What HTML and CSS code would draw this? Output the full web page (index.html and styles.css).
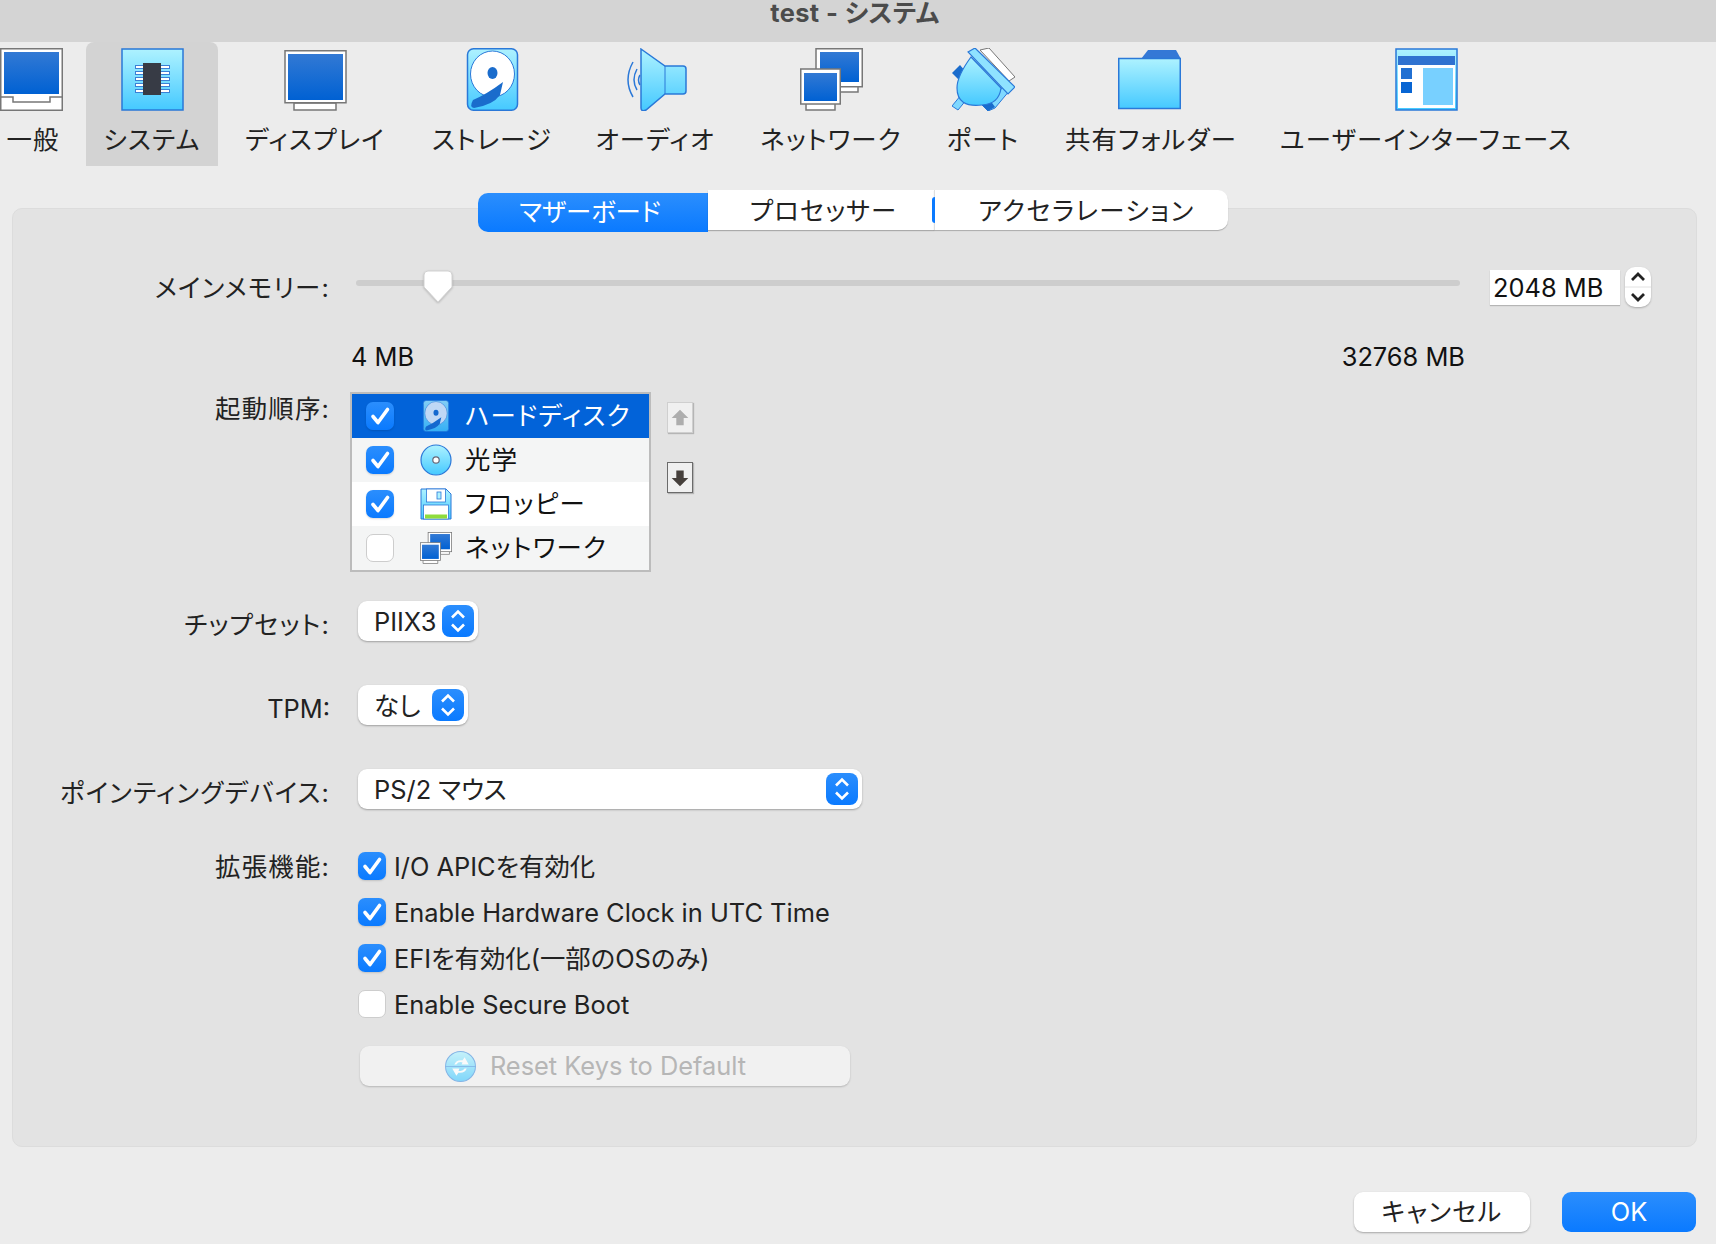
FILE: index.html
```html
<!DOCTYPE html>
<html lang="ja">
<head>
    <meta charset="UTF-8">
    <title>test - システム</title>
    <link rel="stylesheet" href="styles.css">
</head>
<body>
    <!-- Shared gradients and icons -->
    <svg class="defs" aria-hidden="true">
        <defs>
            <linearGradient id="sky" x1="0" y1="0" x2="0" y2="1">
                <stop offset="0" stop-color="#aef2ff"/>
                <stop offset="1" stop-color="#45c9ff"/>
            </linearGradient>
            <linearGradient id="screen" x1="0" y1="0" x2="0" y2="1">
                <stop offset="0" stop-color="#3279d4"/>
                <stop offset="1" stop-color="#0061d3"/>
            </linearGradient>
            <symbol id="i-general" viewBox="0 0 63 63">
                <rect x="0.75" y="0.75" width="61.5" height="61.5" fill="#fff" stroke="#777" stroke-width="1.5"/>
                <rect x="4" y="4" width="55" height="42" fill="url(#screen)"/>
                <path d="M0 49H13V54H50V49H63" fill="none" stroke="#777" stroke-width="1.5"/>
            </symbol>
            <symbol id="i-system" viewBox="0 0 63 63">
                <rect x="1" y="1" width="61" height="61" fill="url(#sky)" stroke="#2a78d8" stroke-width="1.5"/>
                <g fill="#fff" stroke="#3a80d6">
                    <rect x="14.5" y="17.5" width="34" height="3"/>
                    <rect x="14.5" y="23.5" width="34" height="3"/>
                    <rect x="14.5" y="29.5" width="34" height="3"/>
                    <rect x="14.5" y="35.5" width="34" height="3"/>
                    <rect x="14.5" y="41.5" width="34" height="3"/>
                </g>
                <rect x="22" y="15" width="18" height="32" fill="#373b45"/>
            </symbol>
            <symbol id="i-display" viewBox="0 0 63 63">
                <path d="M10 55H52V62H10Z" fill="#fff" stroke="#777" stroke-width="1.5"/>
                <rect x="1" y="2.75" width="61" height="52" fill="#fff" stroke="#777" stroke-width="1.5"/>
                <rect x="4" y="6" width="55" height="46" fill="url(#screen)"/>
            </symbol>
            <symbol id="i-storage" viewBox="0 0 63 63">
                <rect x="6.5" y="0.75" width="50" height="61.5" rx="6" fill="url(#sky)" stroke="#2a78d8" stroke-width="1.5"/>
                <ellipse cx="31.5" cy="26" rx="22" ry="23" fill="#fff" stroke="#2a78d8"/>
                <ellipse cx="31.5" cy="25" rx="5" ry="6" fill="#1a6ccc"/>
                <path d="M42 34L39 47Q32 57 13 60Q8 59 12 52Q26 46 42 34Z" fill="#1a6ccc"/>
            </symbol>
            <symbol id="i-audio" viewBox="0 0 63 63">
                <path d="M17 1L41 18H59Q62 18 62 21V43Q62 46 59 46H41L22 62Q17 64 17 60V4Z" fill="url(#sky)" stroke="#2a78d8" stroke-width="1.5"/>
                <path d="M41 18V46" fill="none" stroke="#2a78d8"/>
                <path d="M9 14Q-1 32 9 49M13 21Q7 32 13 42M16 27Q13 32 16 37" fill="none" stroke="#2a78d8" stroke-width="1.5"/>
            </symbol>
            <symbol id="i-network" viewBox="0 0 63 63">
                <path d="M40 38H58V44H40Z" fill="#fff" stroke="#777" stroke-width="1.5"/>
                <rect x="16" y="0.75" width="46.25" height="38" fill="#fff" stroke="#777" stroke-width="1.5"/>
                <rect x="20" y="4" width="39" height="30" fill="url(#screen)"/>
                <path d="M6 55H35V62H6Z" fill="#fff" stroke="#777" stroke-width="1.5"/>
                <rect x="0.75" y="21" width="39.5" height="35" fill="#fff" stroke="#777" stroke-width="1.5"/>
                <rect x="4" y="25" width="33" height="28" fill="url(#screen)"/>
            </symbol>
            <symbol id="i-port" viewBox="0 0 63 63">
                <path d="M28 2L37 0L63 29L57 33Z" fill="#fff" stroke="#777"/>
                <path d="M0 25L8 17L14 24L8 33Z" fill="#1a6ccc"/>
                <path d="M0 58L9 47L15 51L6 62Z" fill="#7fd8ff" stroke="#2a78d8"/>
                <path d="M38 53L52 38L58 42L43 60L36 63L30 57Z" fill="#7fd8ff" stroke="#2a78d8"/>
                <path d="M30 57L38 52L43 59L36 63Z" fill="#1a6ccc"/>
                <path d="M19 9L49 40Q47 56 30 57Q5 60 5 40Q5 28 19 9Z" fill="url(#sky)" stroke="#2a78d8" stroke-width="1.2"/>
                <path d="M16 4L23 0L63 39L56 46Z" fill="#8fe2ff" stroke="#2a78d8" stroke-width="1.2"/>
            </symbol>
            <symbol id="i-folder" viewBox="0 0 63 63">
                <path d="M23 11L30 2H58L63 11Z" fill="#3478d6"/>
                <rect x="0.75" y="10.5" width="61.5" height="50" fill="url(#sky)" stroke="#2a78d8" stroke-width="1.5"/>
            </symbol>
            <symbol id="i-ui" viewBox="0 0 63 63">
                <rect x="1" y="1" width="61" height="61" fill="url(#sky)" stroke="#2a78d8" stroke-width="1.5"/>
                <rect x="3" y="8" width="57" height="52" fill="#fff"/>
                <rect x="3" y="8" width="57" height="9" fill="#2f72d0"/>
                <rect x="6" y="20" width="11" height="11" fill="#2170d2"/>
                <rect x="6" y="34" width="11" height="11" fill="#0865d3"/>
                <rect x="28" y="20" width="30" height="37" fill="#78d0ff"/>
            </symbol>
            <symbol id="i-disc" viewBox="0 0 32 32">
                <circle cx="16" cy="16" r="15" fill="url(#sky)" stroke="#2a78d8" stroke-width="1.2"/>
                <circle cx="16" cy="16" r="3.2" fill="#fff" stroke="#667" stroke-width="1.2"/>
            </symbol>
            <symbol id="i-floppy" viewBox="0 0 32 32">
                <path d="M1 1H26L31 6V31H1Z" fill="url(#sky)" stroke="#2a78d8"/>
                <rect x="6.5" y="1" width="19" height="13" fill="#fff" stroke="#2a78d8" stroke-width="0.8"/>
                <rect x="17" y="4" width="4" height="7" fill="#aef2ff" stroke="#2a78d8" stroke-width="0.8"/>
                <rect x="3.5" y="17" width="25" height="14" fill="#fff" stroke="#2a78d8" stroke-width="0.8"/>
                <rect x="5" y="26.5" width="22" height="4" fill="#8fdc3c"/>
            </symbol>
            <symbol id="i-reset" viewBox="0 0 32 32">
                <circle cx="16" cy="16" r="14.5" fill="url(#sky)" stroke="#4a94e0"/>
                <path d="M1 16H31" stroke="#4a94e0" fill="none" stroke-width="0.8"/>
                <path d="M10 14Q12 9 18 10L20 7L24 14H17L18 12Q14 11 12 14ZM22 18Q20 23 14 22L12 25L8 18H15L14 20Q18 21 20 18Z" fill="#fff"/>
            </symbol>
            <symbol id="i-updown" viewBox="0 0 32 32">
                <path d="M10 12.5L16 6.5L22 12.5M10 19.5L16 25.5L22 19.5" fill="none" stroke="#fff" stroke-width="2.6"/>
            </symbol>
            <symbol id="i-check" viewBox="0 0 28 28">
                <path d="M7 14.5L12 20.5L21.5 7.5" fill="none" stroke="#fff" stroke-width="3.6" stroke-linecap="round" stroke-linejoin="round"/>
            </symbol>
        </defs>
    </svg>

    <header class="titlebar">test - システム</header>

    <!-- Settings pages -->
    <nav class="toolbar">
        <div class="tab tab-shifted"><svg class="tab-icon"><use href="#i-general"/></svg><span>一般</span></div>
        <div class="tab tab-active"><svg class="tab-icon"><use href="#i-system"/></svg><span>システム</span></div>
        <div class="tab"><svg class="tab-icon"><use href="#i-display"/></svg><span>ディスプレイ</span></div>
        <div class="tab"><svg class="tab-icon"><use href="#i-storage"/></svg><span>ストレージ</span></div>
        <div class="tab"><svg class="tab-icon"><use href="#i-audio"/></svg><span>オーディオ</span></div>
        <div class="tab"><svg class="tab-icon"><use href="#i-network"/></svg><span>ネットワーク</span></div>
        <div class="tab"><svg class="tab-icon"><use href="#i-port"/></svg><span>ポート</span></div>
        <div class="tab tab-shifted"><svg class="tab-icon"><use href="#i-folder"/></svg><span>共有フォルダー</span></div>
        <div class="tab"><svg class="tab-icon"><use href="#i-ui"/></svg><span>ユーザーインターフェース</span></div>
    </nav>

    <div class="segments">
        <div class="segment segment-on">マザーボード</div>
        <div class="segment segment-mid">プロセッサー</div>
        <div class="segment segment-last">アクセラレーション</div>
    </div>

    <main class="panel">
        <!-- Memory -->
        <section class="row row-memory">
            <div class="label">メインメモリー:</div>
            <div class="memory">
                <div class="slider">
                    <div class="track"></div>
                    <svg class="thumb" viewBox="0 0 30 34"><path d="M5 1H25Q29 1 29 5V17L15 32L1 17V5Q1 1 5 1Z" fill="#fff" stroke="#d2d2d2"/></svg>
                </div>
                <div class="field">2048 MB</div>
                <div class="stepper">
                    <svg viewBox="0 0 26 40"><path d="M7 13L13 7L19 13" fill="none" stroke="#222" stroke-width="2.8"/><path d="M7 27L13 33L19 27" fill="none" stroke="#222" stroke-width="2.8"/><path d="M0 20H26" stroke="#e2e2e2"/></svg>
                </div>
            </div>
        </section>

        <section class="row row-range">
            <div></div>
            <div class="range"><span>4 MB</span><span>32768 MB</span></div>
        </section>

        <!-- Boot order -->
        <section class="row row-boot">
            <div class="label label-boot">起動順序:</div>
            <div class="boot">
                <ul class="boot-list">
                    <li class="boot-item boot-selected"><span class="check check-on"><svg><use href="#i-check"/></svg></span><svg class="boot-icon boot-icon-faded"><use href="#i-storage"/></svg>ハードディスク</li>
                    <li class="boot-item boot-alt"><span class="check check-on"><svg><use href="#i-check"/></svg></span><svg class="boot-icon"><use href="#i-disc"/></svg>光学</li>
                    <li class="boot-item"><span class="check check-on"><svg><use href="#i-check"/></svg></span><svg class="boot-icon"><use href="#i-floppy"/></svg>フロッピー</li>
                    <li class="boot-item boot-alt"><span class="check"></span><svg class="boot-icon"><use href="#i-network"/></svg>ネットワーク</li>
                </ul>
                <div class="boot-moves">
                    <div class="move move-off"><svg viewBox="0 0 26 31"><path d="M13 7L22 16H17V24H9V16H4Z" fill="#adadad"/></svg></div>
                    <div class="move"><svg viewBox="0 0 26 31"><path d="M13 25L22 16H17V8H9V16H4Z" fill="#46403c"/></svg></div>
                </div>
            </div>
        </section>

        <!-- Drop-downs -->
        <section class="row row-select">
            <div class="label label-low">チップセット:</div>
            <div class="select select-chipset">PIIX3<span class="select-arrows"><svg><use href="#i-updown"/></svg></span></div>
        </section>
        <section class="row row-select">
            <div class="label label-low label-latin">TPM:</div>
            <div class="select select-tpm">なし<span class="select-arrows"><svg><use href="#i-updown"/></svg></span></div>
        </section>
        <section class="row row-select">
            <div class="label label-low">ポインティングデバイス:</div>
            <div class="select select-mouse">PS/2 マウス<span class="select-arrows"><svg><use href="#i-updown"/></svg></span></div>
        </section>

        <!-- Extended features -->
        <section class="row row-features">
            <div class="label label-feature">拡張機能:</div>
            <div class="features">
                <div class="feature"><span class="check check-on"><svg><use href="#i-check"/></svg></span>I/O APICを有効化</div>
                <div class="feature"><span class="check check-on"><svg><use href="#i-check"/></svg></span>Enable Hardware Clock in UTC Time</div>
                <div class="feature"><span class="check check-on"><svg><use href="#i-check"/></svg></span>EFIを有効化(一部のOSのみ)</div>
                <div class="feature"><span class="check"></span>Enable Secure Boot</div>
                <div class="reset"><svg class="reset-icon"><use href="#i-reset"/></svg>Reset Keys to Default</div>
            </div>
        </section>
    </main>

    <footer class="actions">
        <button class="button">キャンセル</button>
        <button class="button button-primary">OK</button>
    </footer>
</body>
</html>
```

FILE: styles.css
```css
* {
    box-sizing: border-box;
}
html, body {
    height: 100%;
}
body {
    margin: 0;
    overflow: hidden;
    background-color: #ececec;
    color: #222;
    font-family: Inter, "Noto Sans CJK JP", sans-serif;
    font-size: 25.4px;
    font-feature-settings: "palt";
    line-height: 32px;
}
.defs {
    position: absolute;
    width: 0;
    height: 0;
}

/* Title bar */
.titlebar {
    height: 42px;
    padding: 0 6px 16px 0;
    background-color: #d4d4d4;
    color: #4b4b4b;
    font-weight: 700;
    line-height: 26px;
    letter-spacing: 0.4px;
    text-align: center;
}

.toolbar {
    display: grid;
    grid-template-columns: 66px 172px 154px 200px 126px 226px 78px 258px 292px;
    height: 124px;
}
.tab {
    display: flex;
    flex-direction: column;
    align-items: center;
    height: 124px;
    padding-top: 6px;
    letter-spacing: 1.2px;
    white-space: nowrap;
}
.tab-shifted .tab-icon {
    margin-left: -3px;
}
.tab-active {
    justify-self: center;
    width: 132px;
    background-color: #d3d3d3;
    border-radius: 8px 8px 0 0;
}
.tab-icon {
    flex: none;
    width: 63px;
    height: 63px;
    margin-bottom: 13px;
}

/* Segmented control */
.segments {
    position: relative;
    z-index: 1;
    display: flex;
    align-items: flex-start;
    justify-content: center;
    margin-top: 24px;
    padding-right: 10px;
    height: 42px;
    line-height: 42px;
    text-align: center;
}
.segment {
    height: 40px;
    background-color: #fff;
    box-shadow: 0 1px 1px rgba(0, 0, 0, 0.25);
}
.segment-on {
    width: 230px;
    height: 39px;
    margin-top: 3px;
    padding-right: 6px;
    line-height: 38px;
    color: #fff;
    background: linear-gradient(#2b8efd, #0a7aff);
    border-radius: 10px 0 0 10px;
    box-shadow: none;
}
.segment-mid {
    width: 226px;
    padding-left: 5px;
    letter-spacing: 1px;
}
.segment-last {
    position: relative;
    width: 294px;
    padding-left: 10px;
    letter-spacing: 1.5px;
    border-left: 1px solid #dedede;
    border-radius: 0 10px 10px 0;
}
.segment-last::before {
    content: "";
    position: absolute;
    left: -3px;
    top: 7px;
    width: 3px;
    height: 26px;
    background-color: #0a7aff;
    border-radius: 3px 0 0 3px;
}

/* Main panel */
.panel {
    height: 939px;
    margin: -24px 19px 0 12px;
    padding: 58px 0 0;
    background-color: #e3e3e3;
    border: 1px solid #dcdcdc;
    border-radius: 10px;
}
.row {
    display: grid;
    grid-template-columns: 317px 1fr;
}
.label {
    letter-spacing: 1.2px;
    text-align: right;
    white-space: nowrap;
}
.label-latin {
    letter-spacing: 0;
}
.row-memory {
    height: 40px;
}
.row-memory .label {
    line-height: 42px;
}
.label-boot {
    margin-top: 1px;
}
.label-low {
    margin-top: 8px;
}
.label-feature {
    margin-top: 8px;
}

/* Memory slider */
.memory {
    display: flex;
    align-items: center;
    height: 40px;
}
.slider {
    position: relative;
    width: 1104px;
    height: 40px;
    margin-left: 26px;
}
.track {
    height: 6px;
    margin-top: 13px;
    background-color: #cdcdcd;
    border-radius: 3px;
}
.thumb {
    position: absolute;
    left: 67px;
    top: 3px;
    width: 30px;
    height: 34px;
    filter: drop-shadow(0 1px 1px rgba(0, 0, 0, 0.2));
}
.field {
    width: 130px;
    height: 35px;
    margin-left: 30px;
    padding-left: 3px;
    color: #111;
    background-color: #fff;
    box-shadow: 0 1px 1px rgba(0, 0, 0, 0.2);
    line-height: 35px;
}
.stepper {
    width: 26px;
    height: 40px;
    margin-left: 5px;
    background-color: #fff;
    border-radius: 10px;
    box-shadow: 0 1px 2px rgba(0, 0, 0, 0.25);
}
.stepper svg {
    display: block;
    width: 26px;
    height: 40px;
}
.row-range {
    margin-top: 34px;
}
.range {
    display: flex;
    justify-content: space-between;
    width: 1135px;
    padding-left: 21px;
    color: #111;
}

/* Boot order */
.row-boot {
    margin-top: 19px;
}
.boot {
    display: flex;
}
.boot-list {
    width: 301px;
    height: 180px;
    margin: 0 0 0 20px;
    padding: 0;
    list-style-type: none;
    background-color: #fff;
    border: 2px solid #bcbcbc;
}
.boot-item {
    display: flex;
    align-items: center;
    height: 44px;
    padding-left: 14px;
    color: #111;
    letter-spacing: 1.3px;
    white-space: nowrap;
}
.boot-alt {
    background-color: #f4f5f5;
}
.boot-selected {
    color: #fff;
    background-color: #0263d9;
}
.boot-icon {
    flex: none;
    width: 32px;
    height: 32px;
    margin: 0 13px 0 26px;
}
.boot-icon-faded {
    opacity: 0.75;
}
.boot-moves {
    display: flex;
    flex-direction: column;
    gap: 29px;
    margin: 10px 0 0 16px;
}
.move {
    width: 26px;
    height: 31px;
    background-color: #f0f0f0;
    border: 1px solid #6b6b6b;
    box-shadow: 1px 1px 1px rgba(0, 0, 0, 0.2);
}
.move-off {
    border-color: #cfcfcf;
}
.move svg {
    display: block;
    width: 24px;
    height: 29px;
}

/* Check boxes */
.check {
    flex: none;
    display: block;
    width: 28px;
    height: 28px;
    background-color: #fff;
    border: 1px solid #cdcdcd;
    border-radius: 7px;
}
.check-on {
    background: linear-gradient(#2b8efd, #0a7aff);
    border: none;
    box-shadow: 0 1px 2px rgba(0, 0, 0, 0.15);
}
.check svg {
    display: block;
    width: 28px;
    height: 28px;
}

/* Drop-downs */
.row-select {
    margin-top: 44px;
}
.row-boot + .row-select {
    margin-top: 29px;
}
.select {
    display: flex;
    align-items: center;
    justify-content: space-between;
    height: 40px;
    margin-left: 28px;
    padding: 2px 4px 0 16px;
    background-color: #fff;
    border-radius: 9px;
    box-shadow: 0 1px 2px rgba(0, 0, 0, 0.3);
}
.select-chipset {
    width: 120px;
}
.select-tpm {
    width: 110px;
}
.select-mouse {
    width: 504px;
}
.select-arrows {
    flex: none;
    width: 32px;
    height: 32px;
    margin-top: -2px;
    background: linear-gradient(#2b8efd, #0a7aff);
    border-radius: 8px;
}
.select-arrows svg {
    display: block;
    width: 32px;
    height: 32px;
}

/* Extended features */
.row-features {
    margin-top: 34px;
}
.features {
    margin-left: 28px;
}
.feature {
    display: flex;
    align-items: center;
    gap: 8px;
    height: 46px;
    padding-top: 2px;
    white-space: nowrap;
}
.feature .check {
    margin-top: -2px;
}
.reset {
    display: flex;
    align-items: center;
    justify-content: center;
    width: 490px;
    height: 40px;
    margin: 19px 0 0 2px;
    padding-right: 20px;
    color: #b6b6b6;
    background-color: #f1f1f1;
    border-radius: 9px;
    box-shadow: 0 1px 2px rgba(0, 0, 0, 0.2);
}
.reset-icon {
    width: 33px;
    height: 33px;
    margin-right: 13px;
    opacity: 0.65;
}

/* Bottom buttons */
.actions {
    display: flex;
    justify-content: flex-end;
    gap: 32px;
    margin-top: 45px;
    padding-right: 20px;
}
.button {
    width: 176px;
    height: 40px;
    padding: 0;
    color: #222;
    font: inherit;
    font-feature-settings: "palt";
    letter-spacing: 1.2px;
    background-color: #fff;
    border: none;
    border-radius: 9px;
    box-shadow: 0 1px 2px rgba(0, 0, 0, 0.3);
}
.button-primary {
    width: 134px;
    color: #fff;
    letter-spacing: 0;
    background: linear-gradient(#2b8efd, #0a7aff);
    box-shadow: none;
}
```
